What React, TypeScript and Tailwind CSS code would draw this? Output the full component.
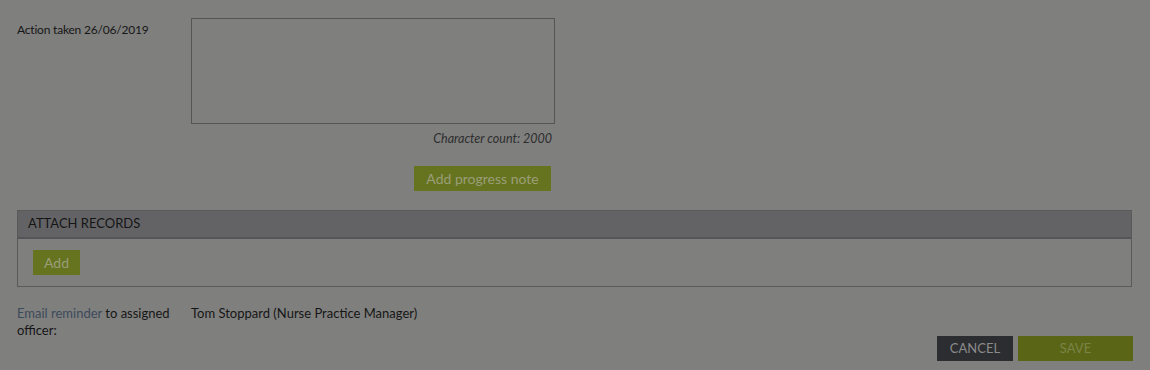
export default function App() {
  return (
    <div className="w-[1150px] h-[370px] overflow-hidden bg-[#7f7f7e] text-[#161616] font-['Lato','Open_Sans',sans-serif] text-[13px]">
      <div className="pl-[17px] pr-[17px] pt-[18px]">
        <div className="flex">
          <div className="w-[174px] pt-[3px] text-[12px] tracking-[-0.2px]">Action taken 26/06/2019</div>
          <div className="w-[364px] flex flex-col items-end">
            <div className="w-full h-[106px] border border-[#555556]" />
            <p className="mt-[6px] mr-[3px] italic text-[12.5px] text-[#2e2e2e]">Character count: 2000</p>
            <button className="mt-[17px] mr-[4px] h-[25px] w-[137px] bg-[#667420] text-[#9a9e78] text-[14px]">
              Add progress note
            </button>
          </div>
        </div>

        <div className="mt-[19px] w-[1115px] border border-[#5a5a5b]">
          <div className="h-[28px] bg-[#636365] border-b-2 border-[#555557] flex items-center pl-[10px] text-[13px] text-[#151515]">
            ATTACH RECORDS
          </div>
          <div className="h-[47px] pt-[11px] pl-[15px]">
            <button className="h-[25px] w-[47px] bg-[#667420] text-[#9a9e78] text-[14px]">Add</button>
          </div>
        </div>

        <div className="mt-[18px] flex">
          <div className="w-[174px] leading-[17px]">
            <span className="text-[#3d4a5b]">Email reminder</span> to assigned officer:
          </div>
          <div className="leading-[17px]">Tom Stoppard (Nurse Practice Manager)</div>
        </div>

        <div className="mt-[-3px] flex justify-end gap-[5px]">
          <button className="h-[25px] w-[76px] bg-[#2c2d30] text-[#8b8b8b] text-[13px]">CANCEL</button>
          <button className="h-[25px] w-[115px] bg-[#5a6615] text-[#7b8348] text-[13px]">SAVE</button>
        </div>
      </div>
    </div>
  );
}
